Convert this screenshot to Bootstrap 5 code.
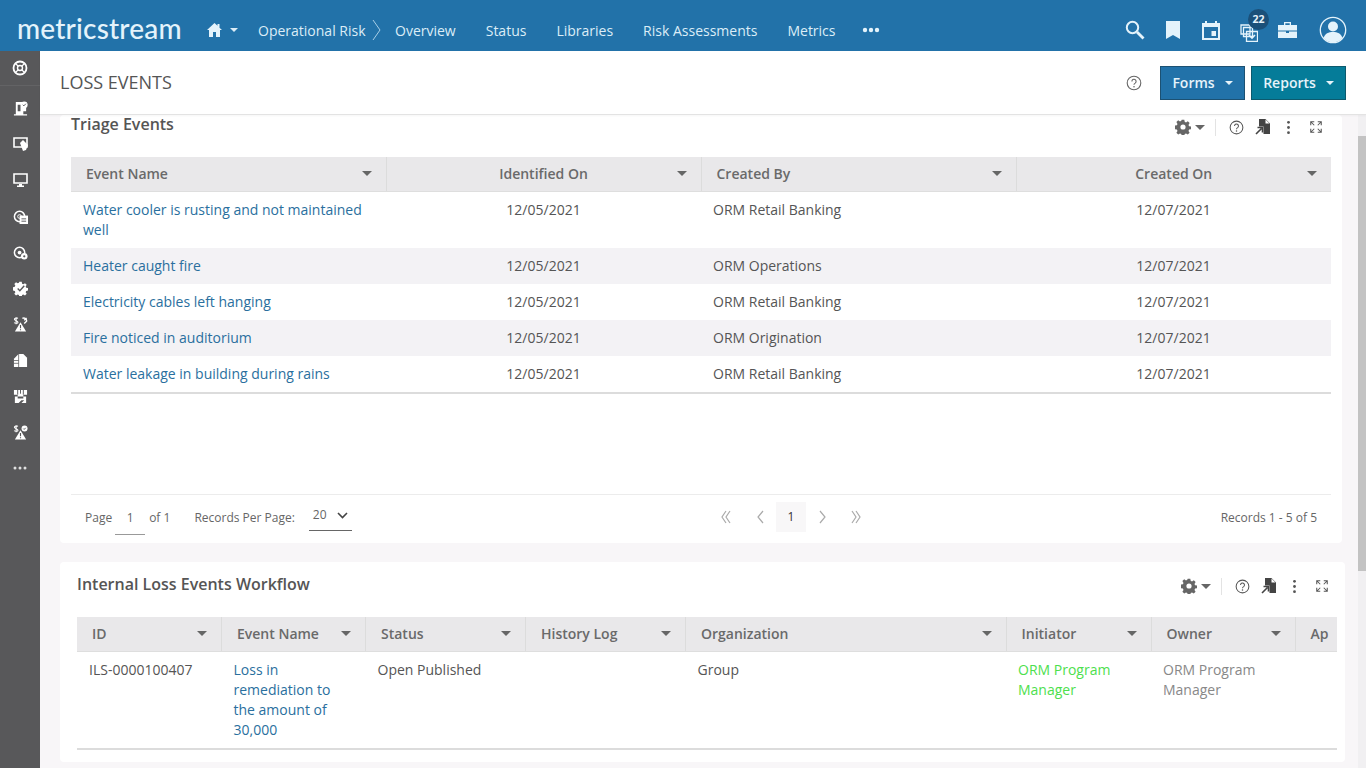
<!DOCTYPE html>
<html lang="en">
<head>
<meta charset="utf-8">
<title>Loss Events</title>
<link href="https://cdn.jsdelivr.net/npm/bootstrap@5.3.0/dist/css/bootstrap.min.css" rel="stylesheet">
<style>
html,body{height:768px;overflow:hidden}
body{font-family:"Open Sans","Liberation Sans",sans-serif;font-size:14px;color:#555;background:#f8f6f8}
.topbar{height:51px;background:#2272a9;color:#dcedf7;padding-top:9px}
.brand{font-family:Lato,"Open Sans",sans-serif;font-size:28px;font-weight:500;line-height:1;color:#e4f3fb;width:207px;padding-left:17px;letter-spacing:.2px;margin-top:-4px;flex:none}
.topnav{gap:30px;font-size:14px}
.topnav span{white-space:nowrap}
.homeitem{width:51px;margin-right:-30px}
.crumb{width:137px;display:flex;align-items:center;margin-right:-30px}
.crumb svg{margin-left:6px}
.navdots{margin-left:-4px}
.tools{margin-left:auto;padding-right:19px}
.tools>*{flex:none}
.tool-mark{margin-left:21px}
.tool-cal{margin-left:22px}
.tasks{position:relative;margin-left:20px;width:18px;height:18px}
.tool-case{margin-left:20px}
.tool-user{margin-left:22px}
.countpill{position:absolute;top:-12px;left:8px;width:21px;height:21px;border-radius:50%;background:#1b5079;color:#e6f2f9;font-size:10.5px;font-weight:700;line-height:21px;text-align:center}
.rail{width:40px;background:#58585a;flex:none;height:717px}
.railitem{height:36px;display:flex;align-items:center;justify-content:center}
.railfirst{height:35px;border-bottom:1px solid #636365;margin-bottom:4px}
.mainpane{flex:1 1 auto;min-width:0;height:717px;display:flex;flex-direction:column;position:relative}
.pagehead{height:64px;background:#fff;border-bottom:1px solid #e3e3e3;padding:0 20px;flex:none;box-shadow:0 1px 2px rgba(0,0,0,.04);position:relative;z-index:1}
.pagehead h1{font-size:18px;font-weight:400;color:#555;margin:0;padding-top:1px}
.headbtn{font-size:14px;font-weight:600;height:34px;padding:0 12px;border-radius:0;color:#e6f3fa;display:flex;align-items:center;gap:10px}
.headbtn:hover{color:#fff}
.btnforms{background:#2272a9;border:1px solid #1c5173;width:85px}
.btnreports{background:#057c99;border:1px solid #0c5a6e;width:95px;margin-left:6px}
.helpmark{margin-right:18px;color:#666}
.caretw{width:0;height:0;border-left:4px solid transparent;border-right:4px solid transparent;border-top:4px solid currentColor}
.canvas{flex:1 1 auto;overflow:hidden;margin-top:-4px;padding:4px 24px 0 20px}
.panelbox{background:#fff;border-radius:4px;width:1282px}
.triage{height:428px;padding:0 11px;display:flex;flex-direction:column}
.workflow{height:200px;width:1285px;margin-top:19px;padding:0 8px 0 17px}
.panelhead{height:42px;display:flex;align-items:flex-start;justify-content:space-between}
.panelhead h2{font-size:16px;font-weight:600;color:#555;margin:0;line-height:20px}
.triage .panelhead h2{line-height:18px}
.workflow .panelhead{height:55px;padding-top:12px}
.ptools{display:flex;align-items:center;padding-right:8px;height:24px}
.pt-gear{color:#666}
.pt-help{color:#555}
.pt-export{color:#444;margin-left:11px}
.pt-kebab{color:#555;margin-left:10px}
.pt-expand{color:#555;margin-left:13px}
.gearcaret{color:#666;margin-left:4px;border-left-width:5px;border-right-width:5px;border-top-width:5px}
.vsep{width:1px;height:17px;background:#e3e3e3;margin:0 13px 0 10px}
.gridtable{table-layout:fixed;width:100%;margin:0;font-size:14px;color:#555;--bs-table-bg:transparent;--bs-table-color:#555;border-collapse:collapse}
.gridtable thead th{background:#e9e8ea;font-weight:600;color:#6a6a6a;height:34px;padding:0 15px;border-bottom:1px solid #dedede;border-right:1px solid #dcdcdc;position:relative;vertical-align:middle;white-space:nowrap;overflow:hidden}
.gridtable thead th:last-child{border-right:0}
.gridtable td{padding:8px 12px;line-height:20px;height:36px;border:0;vertical-align:top}
.gridtable tbody tr:nth-child(even) td{background:#f3f2f5}
.gridtable tbody tr:last-child td{border-bottom:2px solid #dcdcdc}
.gridtable a{color:#2a6f9e;text-decoration:none}
.colcenter{text-align:center}
.sortcaret{position:absolute;right:14px;top:14px;color:#666;border-left-width:5px;border-right-width:5px;border-top-width:5px}
.t1col{width:25%}
.wcol1{width:144.5px}.wcol2{width:144px}.wcol3{width:160px}.wcol4{width:160px}.wcol5{width:320.5px}.wcol6{width:145px}.wcol7{width:144px}.wcol8{width:42px}
.wflow-wrap{overflow:hidden;width:1260px}
.wflow-wrap table{width:1260px}
.greenlink{color:#4de04d}
.mutedcell{color:#888}
.pagerbar{margin-top:auto;height:49px;border-top:1px solid #ececec;font-size:12px;color:#666;padding:0 14px 3px;display:flex;align-items:center;position:relative}
.pagefield{display:inline-block;width:30px;text-align:center;margin:0 4px 0 3px;line-height:32px;height:33px;border-bottom:1px solid #999;position:relative;top:1px}
.perpage{margin-left:24px}
.perfield{display:inline-flex;align-items:center;justify-content:space-between;width:43px;height:30px;margin-left:14px;padding:0 4px;border-bottom:1px solid #666;position:relative;top:-2px}
.pagers{position:absolute;left:637px;top:7px;display:flex;align-items:center;height:30px}
.pgbox{width:30px;height:30px;background:#f8f7f8;text-align:center;line-height:30px;color:#333}
.pgouter{width:36px;display:flex;justify-content:center}
.pginner{width:32px;display:flex;justify-content:center}
.recordcount{margin-left:auto}
.scrolltrack{position:absolute;right:0;top:64px;bottom:0;width:8px;background:#f1f0f2}
.scrollthumb{position:absolute;top:21px;left:0;right:0;height:435px;background:#c3c3c3}
</style>
</head>
<body>
<svg width="0" height="0" class="d-block position-absolute">
<defs>
<symbol id="i-help" viewBox="0 0 16 16"><circle cx="8" cy="8" r="6.800" fill="none" stroke="currentColor" stroke-width="1.100"/><path d="M5.900 6.400a2.100 2.100 0 1 1 3.300 1.700c-.8.500-1.200.9-1.200 1.700" fill="none" stroke="currentColor" stroke-width="1.100"/><circle cx="8" cy="11.800" r=".8" fill="currentColor"/></symbol>
<symbol id="i-gear" viewBox="0 0 16 16"><path fill="currentColor" fill-rule="evenodd" d="M6.700.8h2.600l.4 2 1.300.6 1.800-1.100 1.800 1.800-1.100 1.800.6 1.300 2 .4v2.600l-2 .4-.6 1.300 1.100 1.800-1.800 1.800-1.800-1.100-1.300.6-.4 2H6.700l-.4-2-1.300-.6-1.800 1.100-1.800-1.800 1.100-1.800-.6-1.300-2-.4V6.600l2-.4.600-1.300-1.100-1.800 1.800-1.800L5 2.400l1.300-.6zM8 5.400a2.600 2.600 0 1 0 0 5.200 2.600 2.600 0 0 0 0-5.200z"/></symbol>
<symbol id="i-export" viewBox="0 0 16 16"><path fill="currentColor" d="M4 0h6.500L15 4.500V15H8.500V7.500H4z"/><path fill="#fff" d="M10.500 .5v4h4z"/><path d="M1 15 6.500 9.500M2.500 8.500H7.500V13.500" fill="none" stroke="currentColor" stroke-width="1.600"/></symbol>
<symbol id="i-kebab" viewBox="0 0 16 16"><circle cx="8" cy="2.500" r="1.500" fill="currentColor"/><circle cx="8" cy="8" r="1.500" fill="currentColor"/><circle cx="8" cy="13.500" r="1.500" fill="currentColor"/></symbol>
<symbol id="i-expand" viewBox="0 0 16 16"><path d="M2 6V2h4M2 2l4 4M10 2h4v4M14 2l-4 4M2 10v4h4M2 14l4-4M14 10v4h-4M14 14l-4-4" fill="none" stroke="currentColor" stroke-width="1.200"/></symbol>
<symbol id="i-rb" viewBox="0 0 16 16"><path fill="#fff" fill-rule="evenodd" d="M3 1h7v3l4 2v5h-3v3h4v1.500H1V14h2zM5 4v7h3V4z"/><circle cx="12" cy="4" r="3.600" fill="#fff"/><path d="m10.400 4 1.200 1.200 2.100-2.300" stroke="#58585a" fill="none"/></symbol>
<symbol id="i-alert" viewBox="0 0 16 16"><path fill="#fff" d="M8 5.500 14 15.500H2z"/><path d="M8 8.500v3.500M8 13v1.200" stroke="#58585a" stroke-width="1.200"/><path d="M5.300 1.500C4 .5 1.500 1 1.500 2.500S5.300 4 5.300 5.500 2.500 7 1.200 6M3.300.3v7.400" fill="none" stroke="#fff" stroke-width="1.200"/></symbol>
</defs>
</svg>

<header class="topbar d-flex align-items-center">
  <div class="brand">metricstream</div>
  <nav class="topnav d-flex align-items-center flex-grow-1">
    <div class="homeitem d-flex align-items-center gap-1">
      <svg width="15" height="14" viewBox="0 0 15 14"><path fill="#e4f3fb" d="M7.500 0 10.500 2.800V1H12.500V4.700L15 7h-2v7H9V9H6v5H2V7H0z"/></svg>
      <span class="caretw ms-1"></span>
    </div>
    <div class="crumb"><span>Operational Risk</span><svg width="9" height="22" viewBox="0 0 9 22"><path d="m1 1 7 10-7 10" fill="none" stroke="#a9cfe6"/></svg></div>
    <span>Overview</span>
    <span>Status</span>
    <span>Libraries</span>
    <span>Risk Assessments</span>
    <span>Metrics</span>
    <svg class="navdots" width="18" height="6" viewBox="0 0 18 6"><circle cx="3" cy="3" r="2.200" fill="#e4f3fb"/><circle cx="9" cy="3" r="2.200" fill="#e4f3fb"/><circle cx="15" cy="3" r="2.200" fill="#e4f3fb"/></svg>
    <div class="tools d-flex align-items-center">
      <svg width="20" height="20" viewBox="0 0 20 20"><circle cx="7.500" cy="7.500" r="5.700" fill="none" stroke="#e4f3fb" stroke-width="2"/><path d="m12 12 6.500 6.500" stroke="#e4f3fb" stroke-width="2.800"/></svg>
      <svg class="tool-mark" width="14" height="18" viewBox="0 0 14 18"><path fill="#e4f3fb" d="M0 0h14v18l-7-4-7 4z"/></svg>
      <svg class="tool-cal" width="18" height="19" viewBox="0 0 18 19"><path fill="#e4f3fb" fill-rule="evenodd" d="M3 0h2v2h8V0h2v2h3v17H0V2h3zM2 6v11h14V6zM9.500 10H14v5H9.500z"/></svg>
      <div class="tasks">
        <svg width="18" height="18" viewBox="0 0 18 18"><path fill="none" stroke="#e4f3fb" stroke-width="1.300" d="M1 1h9v9H1zM3.500 3.500h9v9h-9zM6.500 7.500h11v10h-11z"/><path d="m9 11 3 3 3-3" fill="none" stroke="#e4f3fb" stroke-width="1.600"/></svg>
        <span class="countpill">22</span>
      </div>
      <svg class="tool-case" width="19" height="16" viewBox="0 0 19 16"><path fill="#e4f3fb" fill-rule="evenodd" d="M6 0h7v3h6v13H0V3h6zm1.300 1.300V3h4.400V1.300zM0 8.500h19v1H11v1.500H8V9.500H0z"/></svg>
      <svg class="tool-user" width="28" height="28" viewBox="0 0 28 28"><circle cx="14" cy="14" r="12.700" fill="none" stroke="#e4f3fb" stroke-width="1.300"/><circle cx="14" cy="10.500" r="5" fill="#e4f3fb"/><path fill="#e4f3fb" d="M4.500 22c1.500-4.500 5-6 9.500-6s8 1.500 9.500 6a12.700 12.700 0 0 1-19 0z"/></svg>
    </div>
  </nav>
</header>

<div class="d-flex">
  <aside class="rail d-flex flex-column">
    <div class="railitem railfirst"><svg width="16" height="16" viewBox="0 0 16 16"><circle cx="8" cy="8" r="6.500" fill="none" stroke="#fff" stroke-width="1.800"/><circle cx="8" cy="8" r="2.500" fill="none" stroke="#fff" stroke-width="1.400"/><path d="m3 3 3 3M13 3l-3 3M3 13l3-3M13 13l-3-3" stroke="#fff" stroke-width="1.200"/></svg></div>
    <div class="railitem"><svg width="15" height="15"><use href="#i-rb"/></svg></div>
    <div class="railitem"><svg width="15" height="14" viewBox="0 0 15 14"><path d="M1 1h13v9H1z" fill="none" stroke="#fff" stroke-width="1.600"/><path fill="#fff" d="m7 6 3-3 5 5-2 5-3 1z"/></svg></div>
    <div class="railitem"><svg width="15" height="14" viewBox="0 0 15 14"><path d="M1 1h13v9H1z" fill="none" stroke="#fff" stroke-width="1.600"/><path fill="#fff" d="M6 11h3v1.500h2V14H4v-1.500h2z"/></svg></div>
    <div class="railitem"><svg width="15" height="15" viewBox="0 0 16 16"><circle cx="7" cy="8" r="5.500" fill="none" stroke="#fff" stroke-width="1.600"/><circle cx="7" cy="8" r="2" fill="none" stroke="#fff"/><path fill="#fff" d="M7 7h9v9H7z"/><path d="M9 10.500h5M9 13h5" stroke="#58585a"/></svg></div>
    <div class="railitem"><svg width="15" height="15" viewBox="0 0 16 16"><circle cx="7" cy="8" r="5.500" fill="none" stroke="#fff" stroke-width="1.600"/><circle cx="7" cy="8" r="2" fill="#fff"/><circle cx="12" cy="12" r="3.500" fill="#fff"/><circle cx="12" cy="12" r="1.200" fill="#58585a"/></svg></div>
    <div class="railitem"><svg width="15" height="15" viewBox="0 0 16 16"><path fill="#fff" d="M6.700.8h2.600l.4 2 1.300.6 1.800-1.100 1.800 1.800-1.100 1.800.6 1.300 2 .4v2.600l-2 .4-.6 1.300 1.100 1.800-1.800 1.800-1.800-1.100-1.300.6-.4 2H6.700l-.4-2-1.300-.6-1.800 1.100-1.800-1.800 1.100-1.800-.6-1.300-2-.4V6.600l2-.4.600-1.300-1.100-1.800 1.800-1.800L5 2.400l1.300-.6z"/><path d="m5 8 2.300 2.300L12 5" fill="none" stroke="#58585a" stroke-width="1.500"/></svg></div>
    <div class="railitem"><svg width="15" height="15" viewBox="0 0 16 16"><use href="#i-alert"/><path d="M10 1.500a3 3 0 0 1 4.500 3L12 7M14.500 1 12 3.500" fill="none" stroke="#fff" stroke-width="1.500"/></svg></div>
    <div class="railitem"><svg width="15" height="15" viewBox="0 0 16 16"><path fill="#fff" d="M6 1h5l4 4v10H1V6z"/><path d="M1 8h5M1 11h5M6 1v14" stroke="#58585a" stroke-width=".8"/></svg></div>
    <div class="railitem"><svg width="15" height="15" viewBox="0 0 16 16"><path fill="#fff" d="M1 1h14v5h-4v2H5V6H1zM2 8h3v2h6V8h3v7H9l3-3H9l-3 3H2z"/><path d="M5 1v5M8 1v4M11 1v5" stroke="#58585a"/></svg></div>
    <div class="railitem"><svg width="15" height="15" viewBox="0 0 16 16"><use href="#i-alert"/><circle cx="12.300" cy="3.800" r="3.200" fill="#fff"/><path d="m11 3.800.9.9 1.600-1.700" fill="none" stroke="#58585a"/></svg></div>
    <div class="railitem"><svg width="14" height="4" viewBox="0 0 14 4"><circle cx="2" cy="2" r="1.500" fill="#e0e0e0"/><circle cx="7" cy="2" r="1.500" fill="#e0e0e0"/><circle cx="12" cy="2" r="1.500" fill="#e0e0e0"/></svg></div>
  </aside>

  <main class="mainpane">
    <div class="pagehead d-flex align-items-center">
      <h1>LOSS EVENTS</h1>
      <svg class="helpmark ms-auto" width="16" height="16"><use href="#i-help"/></svg>
      <a href="#" class="btn headbtn btnforms justify-content-center">Forms <span class="caretw"></span></a>
      <a href="#" class="btn headbtn btnreports justify-content-center">Reports <span class="caretw"></span></a>
    </div>

    <div class="canvas">
      <section class="panelbox triage">
        <div class="panelhead">
          <h2>Triage Events</h2>
          <div class="ptools">
            <svg class="pt-gear" width="16" height="16"><use href="#i-gear"/></svg><span class="caretw gearcaret"></span><span class="vsep"></span>
            <svg class="pt-help" width="15" height="15"><use href="#i-help"/></svg>
            <svg class="pt-export" width="16" height="16"><use href="#i-export"/></svg>
            <svg class="pt-kebab" width="15" height="15"><use href="#i-kebab"/></svg>
            <svg class="pt-expand" width="14" height="14"><use href="#i-expand"/></svg>
          </div>
        </div>
        <table class="table gridtable">
          <colgroup><col class="t1col"><col class="t1col"><col class="t1col"><col class="t1col"></colgroup>
          <thead>
            <tr>
              <th>Event Name<span class="caretw sortcaret"></span></th>
              <th class="colcenter">Identified On<span class="caretw sortcaret"></span></th>
              <th>Created By<span class="caretw sortcaret"></span></th>
              <th class="colcenter">Created On<span class="caretw sortcaret"></span></th>
            </tr>
          </thead>
          <tbody>
            <tr><td><a href="#">Water cooler is rusting and not maintained well</a></td><td class="colcenter">12/05/2021</td><td>ORM Retail Banking</td><td class="colcenter">12/07/2021</td></tr>
            <tr><td><a href="#">Heater caught fire</a></td><td class="colcenter">12/05/2021</td><td>ORM Operations</td><td class="colcenter">12/07/2021</td></tr>
            <tr><td><a href="#">Electricity cables left hanging</a></td><td class="colcenter">12/05/2021</td><td>ORM Retail Banking</td><td class="colcenter">12/07/2021</td></tr>
            <tr><td><a href="#">Fire noticed in auditorium</a></td><td class="colcenter">12/05/2021</td><td>ORM Origination</td><td class="colcenter">12/07/2021</td></tr>
            <tr><td><a href="#">Water leakage in building during rains</a></td><td class="colcenter">12/05/2021</td><td>ORM Retail Banking</td><td class="colcenter">12/07/2021</td></tr>
          </tbody>
        </table>
        <div class="pagerbar">
          <span>Page</span><span class="pagefield">1</span><span>of 1</span>
          <span class="perpage">Records Per Page:</span>
          <span class="perfield"><span>20</span><svg width="11" height="7" viewBox="0 0 11 7"><path d="m1 1 4.500 4.500L10 1" fill="none" stroke="#444" stroke-width="1.600"/></svg></span>
          <div class="pagers">
            <span class="pgouter"><svg width="10" height="14" viewBox="0 0 10 14"><path d="M5 1 1 7l4 6M9 1 5 7l4 6" fill="none" stroke="#aaa" stroke-width="1.200"/></svg></span>
            <span class="pginner"><svg width="7" height="14" viewBox="0 0 7 14"><path d="M6 1 1 7l5 6" fill="none" stroke="#aaa" stroke-width="1.200"/></svg></span>
            <span class="pgbox">1</span>
            <span class="pginner"><svg width="7" height="14" viewBox="0 0 7 14"><path d="m1 1 5 6-5 6" fill="none" stroke="#aaa" stroke-width="1.200"/></svg></span>
            <span class="pgouter"><svg width="10" height="14" viewBox="0 0 10 14"><path d="m1 1 4 6-4 6M5 1l4 6-4 6" fill="none" stroke="#aaa" stroke-width="1.200"/></svg></span>
          </div>
          <span class="recordcount">Records 1 - 5 of 5</span>
        </div>
      </section>

      <section class="panelbox workflow">
        <div class="panelhead">
          <h2>Internal Loss Events Workflow</h2>
          <div class="ptools">
            <svg class="pt-gear" width="16" height="16"><use href="#i-gear"/></svg><span class="caretw gearcaret"></span><span class="vsep"></span>
            <svg class="pt-help" width="15" height="15"><use href="#i-help"/></svg>
            <svg class="pt-export" width="16" height="16"><use href="#i-export"/></svg>
            <svg class="pt-kebab" width="15" height="15"><use href="#i-kebab"/></svg>
            <svg class="pt-expand" width="14" height="14"><use href="#i-expand"/></svg>
          </div>
        </div>
        <div class="wflow-wrap">
          <table class="table gridtable">
            <colgroup><col class="wcol1"><col class="wcol2"><col class="wcol3"><col class="wcol4"><col class="wcol5"><col class="wcol6"><col class="wcol7"><col class="wcol8"></colgroup>
            <thead>
              <tr>
                <th>ID<span class="caretw sortcaret"></span></th>
                <th>Event Name<span class="caretw sortcaret"></span></th>
                <th>Status<span class="caretw sortcaret"></span></th>
                <th>History Log<span class="caretw sortcaret"></span></th>
                <th>Organization<span class="caretw sortcaret"></span></th>
                <th>Initiator<span class="caretw sortcaret"></span></th>
                <th>Owner<span class="caretw sortcaret"></span></th>
                <th>Ap</th>
              </tr>
            </thead>
            <tbody>
              <tr>
                <td>ILS-0000100407</td>
                <td><a href="#">Loss in remediation to the amount of 30,000</a></td>
                <td>Open Published</td>
                <td></td>
                <td>Group</td>
                <td class="greenlink">ORM Program Manager</td>
                <td class="mutedcell">ORM Program Manager</td>
                <td></td>
              </tr>
            </tbody>
          </table>
        </div>
      </section>
    </div>
    <div class="scrolltrack"><div class="scrollthumb"></div></div>
  </main>
</div>
<script src="https://cdn.jsdelivr.net/npm/bootstrap@5.3.0/dist/js/bootstrap.bundle.min.js"></script>
</body>
</html>
